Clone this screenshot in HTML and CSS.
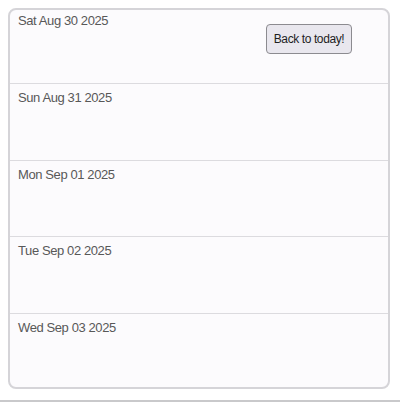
FILE: index.html
```html
<!DOCTYPE html>
<html>
<head>
<meta charset="utf-8">
<link rel="stylesheet" href="styles.css">
</head>
<body>
<div class="page">
  <div class="list">
    <div class="row row-first">Sat Aug 30 2025</div>
    <div class="row">Sun Aug 31 2025</div>
    <div class="row">Mon Sep 01 2025</div>
    <div class="row">Tue Sep 02 2025</div>
    <div class="row row-last">Wed Sep 03 2025</div>
    <button class="today-btn">Back to today!</button>
  </div>
  <div class="bottom-line"></div>
</div>
</body>
</html>
```

FILE: styles.css
```css
html, body {
  margin: 0;
  padding: 0;
  background: #ffffff;
}
.page {
  width: 400px;
  height: 402px;
  display: flex;
  flex-direction: column;
  padding-top: 8px;
  box-sizing: border-box;
}
.list {
  position: relative;
  margin-left: 8px;
  width: 382px;
  height: 381px;
  box-sizing: border-box;
  border: 2px solid #d5d4d8;
  border-radius: 8px;
  background: #fcfbfd;
  display: flex;
  flex-direction: column;
  overflow: hidden;
  font-family: "Liberation Sans", Arial, sans-serif;
}
.row {
  box-sizing: border-box;
  height: 76.67px;
  flex: none;
  border-bottom: 1px solid #dcdbdf;
  padding: 6px 8px 0;
  font-size: 13px;
  line-height: 15px;
  letter-spacing: -0.4px;
  color: #585858;
}
.row-first {
  height: 74px;
  padding-top: 3px;
}
.row-last {
  height: 73px;
  border-bottom: none;
}
.today-btn {
  position: absolute;
  top: 14px;
  right: 36px;
  width: 86px;
  height: 30px;
  box-sizing: border-box;
  background: #e9e7ee;
  border: 1px solid #8c8b90;
  border-radius: 4px;
  font-family: "Liberation Sans", Arial, sans-serif;
  font-size: 12px;
  letter-spacing: -0.4px;
  color: #1e1e1e;
  padding: 0;
}
.bottom-line {
  margin-top: 11px;
  height: 2px;
  background: #c9c9cb;
}
```
